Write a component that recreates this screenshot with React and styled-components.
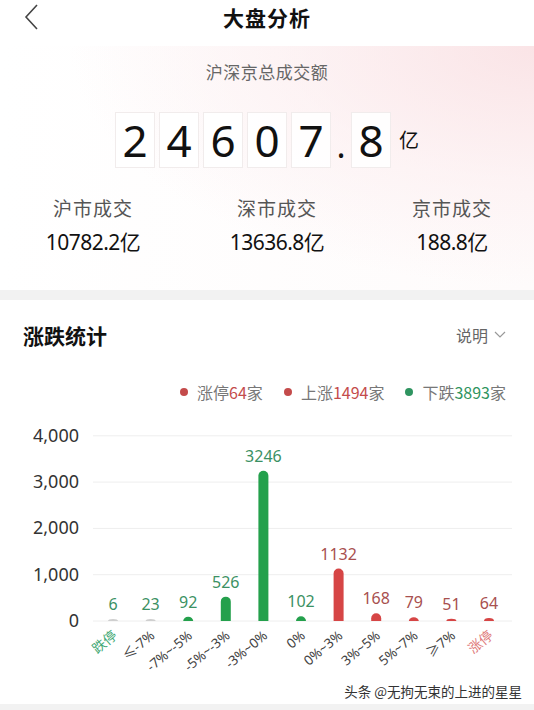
import React from 'react';
import styled, { createGlobalStyle } from 'styled-components';

const colors = {
  black: '#111111',
  text: '#333333',
  gray: '#666666',
  band: '#f2f2f2',
  red: '#d64545',
  redText: '#a8504f',
  green: '#24a04c',
  greenText: '#3b9163',
};

const GlobalStyle = createGlobalStyle`
  body {
    margin: 0;
    background: #ffffff;
    font-family: "Noto Sans CJK SC", "Noto Sans", sans-serif;
  }
`;

const Page = styled.div`
  width: 534px;
  height: 710px;
  position: relative;
  overflow: hidden;
  background: #ffffff;
`;

const Header = styled.div`
  height: 46px;
  display: flex;
  align-items: flex-start;
  justify-content: center;
  position: relative;

  .back {
    position: absolute;
    left: 22px;
    top: 3px;
  }
`;

const Title = styled.span`
  margin-top: 3px;
  font-size: 21px;
  line-height: 28px;
  font-weight: bold;
  color: ${colors.black};
  letter-spacing: 1px;
`;

const Summary = styled.div`
  height: 244px;
  display: flex;
  flex-direction: column;
  align-items: center;
  background:
    radial-gradient(ellipse 470px 240px at 540px 0px, rgba(249, 222, 225, 0.8), rgba(252, 236, 238, 0.55) 55%, rgba(255, 255, 255, 0) 100%),
    linear-gradient(90deg, #ffffff 0px, #fefbfb 534px);
`;

const SummaryLabel = styled.div`
  margin-top: 13px;
  font-size: 17px;
  line-height: 26px;
  color: ${colors.gray};
  letter-spacing: 0.5px;
`;

const DigitRow = styled.div`
  margin-top: 27px;
  display: flex;
  align-items: center;
  gap: 4px;
`;

const DigitBox = styled.div`
  width: 40px;
  height: 56px;
  display: flex;
  align-items: center;
  justify-content: center;
  background: rgba(255, 255, 255, 0.9);
  border: 1px solid #f1ecec;
  box-sizing: border-box;
  font-family: "Noto Sans", sans-serif;
  font-size: 44px;
  line-height: 1;
  color: ${colors.black};
`;

const Dot = styled.div`
  width: 12px;
  font-family: "Noto Sans", sans-serif;
  font-size: 34px;
  line-height: 1;
  margin-top: 10px;
  color: ${colors.black};
  text-align: center;
`;

const Unit = styled.span`
  font-size: 20px;
  color: ${colors.black};
  margin-left: 4px;
  margin-top: -2px;
`;

const Markets = styled.div`
  width: 100%;
  margin-top: 26px;
  display: grid;
  grid-template-columns: 186px 186px 162px;
`;

const Market = styled.div`
  display: flex;
  flex-direction: column;
  align-items: center;
  gap: 6px;
  margin-left: ${(p) => p.$shift || 0}px;
`;

const MarketLabel = styled.span`
  font-size: 19px;
  line-height: 27px;
  color: #555555;
  letter-spacing: 1px;
`;

const MarketValue = styled.span`
  font-family: "Noto Sans", "Noto Sans CJK SC", sans-serif;
  font-size: 21px;
  line-height: 30px;
  color: ${colors.black};
  letter-spacing: -0.5px;
`;

const Band = styled.div`
  height: 10px;
  background: ${colors.band};
`;

const Section = styled.div`
  position: relative;
  height: 410px;
`;

const SectionHead = styled.div`
  display: flex;
  justify-content: space-between;
  align-items: center;
  padding: 20px 28px 0 23px;
`;

const SectionTitle = styled.span`
  font-size: 21px;
  font-weight: bold;
  color: ${colors.black};
`;

const Explain = styled.span`
  font-size: 16px;
  color: ${colors.gray};
  display: flex;
  align-items: center;
  gap: 6px;
`;

const Legend = styled.div`
  display: flex;
  justify-content: flex-end;
  gap: 21px;
  padding: 30px 28px 0 0;
  font-size: 16px;
  color: #777777;
`;

const LegendItem = styled.span`
  display: flex;
  align-items: center;

  &::before {
    content: '';
    width: 8px;
    height: 8px;
    border-radius: 50%;
    background: ${(p) => p.$color};
    margin-right: 9px;
  }

  b {
    font-weight: normal;
    color: ${(p) => p.$color};
  }
`;

const Chart = styled.svg`
  display: block;
  margin-top: 11px;
`;

const Watermark = styled.div`
  position: absolute;
  right: 12px;
  bottom: 9px;
  font-size: 13.5px;
  color: #333333;
  text-shadow: 0 0 2px #fff, 0 0 2px #fff;
`;

const BottomBand = styled.div`
  position: absolute;
  left: 0;
  right: 0;
  bottom: 0;
  height: 6px;
  background: ${colors.band};
`;

const bars = [
  { label: '跌停', value: 6, up: false, special: true },
  { label: '≤-7%', value: 23, up: false },
  { label: '-7%~-5%', value: 92, up: false },
  { label: '-5%~-3%', value: 526, up: false },
  { label: '-3%~0%', value: 3246, up: false },
  { label: '0%', value: 102, up: false },
  { label: '0%~3%', value: 1132, up: true },
  { label: '3%~5%', value: 168, up: true },
  { label: '5%~7%', value: 79, up: true },
  { label: '≥7%', value: 51, up: true },
  { label: '涨停', value: 64, up: true, special: true },
];

const BASE = 206;
const SCALE = 46.3 / 1000;

function BarChart() {
  return (
    <Chart width="534" height="270" viewBox="0 0 534 270">
      {[0, 1000, 2000, 3000, 4000].map((v) => {
        const y = BASE - v * SCALE;
        return (
          <g key={v}>
            <line x1="93" x2="512" y1={y} y2={y} stroke="#eeeeee" strokeWidth="1" />
            <text
              x="79"
              y={y + 6}
              textAnchor="end"
              fontSize="18"
              fill="#333"
              fontFamily="Noto Sans, sans-serif"
            >
              {v.toLocaleString('en-US')}
            </text>
          </g>
        );
      })}
      {bars.map((b, i) => {
        const cx = 113 + i * 37.6;
        const h = Math.max(b.value * SCALE, 2);
        const small = b.value < 40;
        const fill = small ? '#cfcfcf' : b.up ? colors.red : colors.green;
        return (
          <g key={b.label}>
            <path
              d={`M${cx - 5} ${BASE} V${BASE - h + Math.min(5, h)} a5 ${Math.min(5, h)} 0 0 1 10 0 V${BASE} Z`}
              fill={fill}
            />
            <text
              x={cx}
              y={BASE - h - 9}
              textAnchor="middle"
              fontSize="16"
              fill={b.up ? colors.redText : colors.greenText}
              fontFamily="Noto Sans, sans-serif"
            >
              {b.value}
            </text>
            <text
              x={cx + 5}
              y={BASE + 16}
              textAnchor="end"
              fontSize="13.5"
              transform={`rotate(-40 ${cx + 5} ${BASE + 16})`}
              fill={b.special ? (b.up ? '#e07a7a' : '#3fa874') : '#444'}
              fontFamily="Noto Sans, Noto Sans CJK SC, sans-serif"
            >
              {b.label}
            </text>
          </g>
        );
      })}
    </Chart>
  );
}

export default function App() {
  const digits = ['2', '4', '6', '0', '7'];
  return (
    <Page>
      <GlobalStyle />
      <Header>
        <svg className="back" width="20" height="28" viewBox="0 0 20 28">
          <path d="M15 2 L4 14 L15 26" fill="none" stroke="#444" strokeWidth="1.6" />
        </svg>
        <Title>大盘分析</Title>
      </Header>
      <Summary>
        <SummaryLabel>沪深京总成交额</SummaryLabel>
        <DigitRow>
          {digits.map((d, i) => (
            <DigitBox key={i}>{d}</DigitBox>
          ))}
          <Dot>.</Dot>
          <DigitBox>8</DigitBox>
          <Unit>亿</Unit>
        </DigitRow>
        <Markets>
          <Market $shift={0}>
            <MarketLabel>沪市成交</MarketLabel>
            <MarketValue>10782.2亿</MarketValue>
          </Market>
          <Market $shift={-4}>
            <MarketLabel>深市成交</MarketLabel>
            <MarketValue>13636.8亿</MarketValue>
          </Market>
          <Market $shift={-2}>
            <MarketLabel>京市成交</MarketLabel>
            <MarketValue>188.8亿</MarketValue>
          </Market>
        </Markets>
      </Summary>
      <Band />
      <Section>
        <SectionHead>
          <SectionTitle>涨跌统计</SectionTitle>
          <Explain>
            说明
            <svg width="12" height="8" viewBox="0 0 12 8">
              <path d="M1 1 L6 6 L11 1" fill="none" stroke="#999" strokeWidth="1.2" />
            </svg>
          </Explain>
        </SectionHead>
        <Legend>
          <LegendItem $color="#c44b4b">
            涨停<b>64</b>家
          </LegendItem>
          <LegendItem $color="#c44b4b">
            上涨<b>1494</b>家
          </LegendItem>
          <LegendItem $color="#2f9460">
            下跌<b>3893</b>家
          </LegendItem>
        </Legend>
        <BarChart />
        <Watermark>头条 @无拘无束的上进的星星</Watermark>
        <BottomBand />
      </Section>
    </Page>
  );
}
